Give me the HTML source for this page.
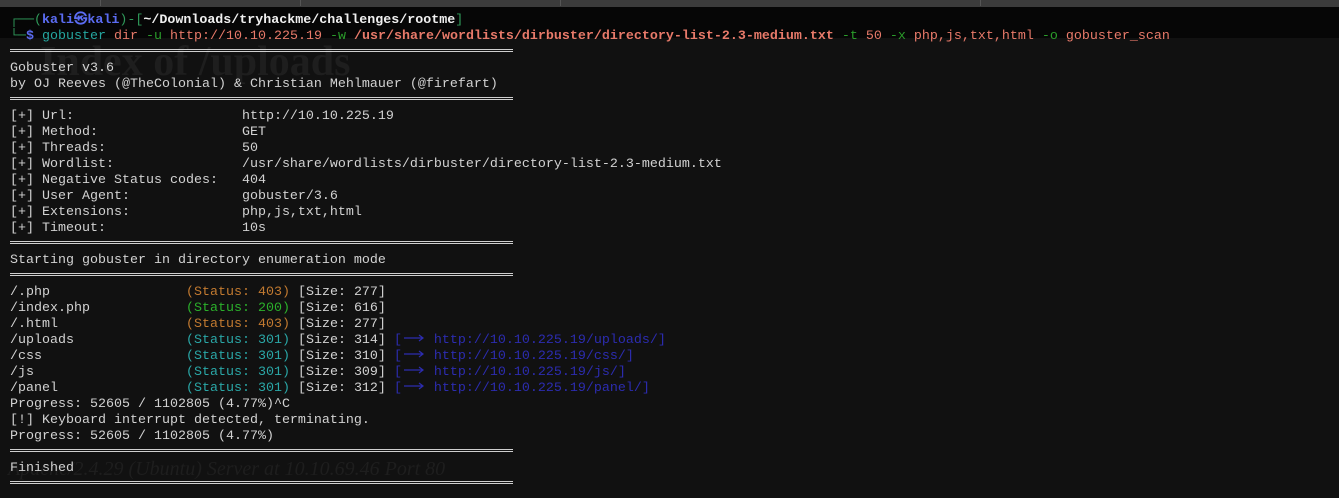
<!DOCTYPE html>
<html><head><meta charset="utf-8"><style>
html,body{margin:0;padding:0;width:1339px;height:498px;overflow:hidden;background:#111111;}
.top{position:absolute;left:0;top:0;width:1339px;height:7px;background:#3b3b3b;}
.tab{position:absolute;top:0;height:6px;border-right:1px solid #555;}
.band{position:absolute;left:0;top:7px;width:1339px;height:31px;background:#060606;}
pre{position:absolute;left:10px;top:13px;margin:0;font-family:"Liberation Mono","DejaVu Sans Mono",monospace;font-size:13.33px;line-height:16px;color:#d2d2d2;white-space:pre;}
.g{color:#2f9a5a}.b{color:#5b6cf2;font-weight:bold}.w{color:#f0f0f0;font-weight:bold}
.c{color:#25a7a0}.s{color:#e87a6a}.sb{color:#e87a6a;font-weight:bold}.gr{color:#2a9c2a}
.o{color:#c27a30}.gn{color:#2bb02b}.t{color:#2aa7a7}.lk{color:#2c2cb0}
.ar{display:inline-block;width:24px;height:10px;vertical-align:0px}
.sep{position:absolute;left:10px;width:503px;height:1px;border-top:1px solid #cfcfcf;border-bottom:1px solid #cfcfcf;box-sizing:content-box;height:1px;}
.ghost{position:absolute;color:#1e1e1e;font-family:"Liberation Serif",serif;}
</style></head><body>
<div class="top"><div class="tab" style="left:0;width:100px"></div><div class="tab" style="left:100px;width:200px"></div><div class="tab" style="left:300px;width:260px"></div><div class="tab" style="left:560px;width:420px"></div></div>
<div class="band"></div>
<div class="ghost" style="left:40px;top:38px;font-size:42px;font-weight:bold">Index of /uploads</div>
<div class="ghost" style="left:8px;top:458px;font-size:20px;font-style:italic">Apache/2.4.29 (Ubuntu) Server at 10.10.69.46 Port 80</div>
<div class="sep" style="top:49px"></div>
<div class="sep" style="top:97px"></div>
<div class="sep" style="top:241px"></div>
<div class="sep" style="top:273px"></div>
<div class="sep" style="top:449px"></div>
<div class="sep" style="top:481px"></div>
<pre><span class="g">┌──(</span><span class="b">kali㉿kali</span><span class="g">)-[</span><span class="w">~/Downloads/tryhackme/challenges/rootme</span><span class="g">]</span>
<span class="g">└─</span><span class="b">$</span> <span class="c">gobuster</span> <span class="s">dir</span> <span class="gr">-u</span> <span class="s">http://10.10.225.19</span> <span class="gr">-w</span> <span class="sb">/usr/share/wordlists/dirbuster/directory-list-2.3-medium.txt</span> <span class="gr">-t</span> <span class="s">50</span> <span class="gr">-x</span> <span class="s">php,js,txt,html</span> <span class="gr">-o</span> <span class="s">gobuster_scan</span>

Gobuster v3.6
by OJ Reeves (@TheColonial) &amp; Christian Mehlmauer (@firefart)

[+] Url:                     http://10.10.225.19
[+] Method:                  GET
[+] Threads:                 50
[+] Wordlist:                /usr/share/wordlists/dirbuster/directory-list-2.3-medium.txt
[+] Negative Status codes:   404
[+] User Agent:              gobuster/3.6
[+] Extensions:              php,js,txt,html
[+] Timeout:                 10s

Starting gobuster in directory enumeration mode

/.php                 <span class="o">(Status: 403)</span> [Size: 277]
/index.php            <span class="gn">(Status: 200)</span> [Size: 616]
/.html                <span class="o">(Status: 403)</span> [Size: 277]
/uploads              <span class="t">(Status: 301)</span> [Size: 314] <span class="lk">[<svg class="ar" viewBox="0 0 24 10"><path d="M2 5H21M17 2L21 5L17 8" stroke="#2c2cb0" stroke-width="1.2" fill="none"/></svg> http://10.10.225.19/uploads/]</span>
/css                  <span class="t">(Status: 301)</span> [Size: 310] <span class="lk">[<svg class="ar" viewBox="0 0 24 10"><path d="M2 5H21M17 2L21 5L17 8" stroke="#2c2cb0" stroke-width="1.2" fill="none"/></svg> http://10.10.225.19/css/]</span>
/js                   <span class="t">(Status: 301)</span> [Size: 309] <span class="lk">[<svg class="ar" viewBox="0 0 24 10"><path d="M2 5H21M17 2L21 5L17 8" stroke="#2c2cb0" stroke-width="1.2" fill="none"/></svg> http://10.10.225.19/js/]</span>
/panel                <span class="t">(Status: 301)</span> [Size: 312] <span class="lk">[<svg class="ar" viewBox="0 0 24 10"><path d="M2 5H21M17 2L21 5L17 8" stroke="#2c2cb0" stroke-width="1.2" fill="none"/></svg> http://10.10.225.19/panel/]</span>
Progress: 52605 / 1102805 (4.77%)^C
[!] Keyboard interrupt detected, terminating.
Progress: 52605 / 1102805 (4.77%)

Finished
</pre>
</body></html>
